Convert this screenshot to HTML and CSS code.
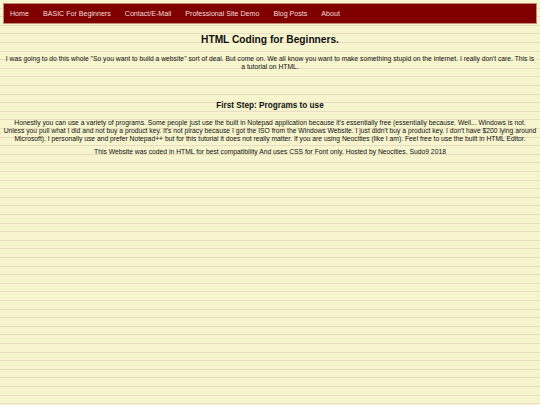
FILE: index.html
```html
<!DOCTYPE html>
<html>
<head>
<meta charset="utf-8">
<title>HTML Coding for Beginners</title>
<link rel="stylesheet" href="styles.css">
</head>
<body>
<nav class="topnav">
  <a href="#">Home</a>
  <a href="#">BASIC For Beginners</a>
  <a href="#">Contact/E-Mail</a>
  <a href="#">Professional Site Demo</a>
  <a href="#">Blog Posts</a>
  <a href="#">About</a>
</nav>
<main class="content">
  <h1 class="title">HTML Coding for Beginners.</h1>
  <p class="intro">I was going to do this whole "So you want to build a website" sort of deal. But come on. We all know you want to make something stupid on the internet. I really don't care. This is a tutorial on HTML.</p>
  <h2 class="step">First Step: Programs to use</h2>
  <p class="body">Honestly you can use a variety of programs. Some people just use the built in Notepad application because it's essentially free (essentially because. Well... Windows is not. Unless you pull what I did and not buy a product key. It's not piracy because I got the ISO from the Windows Website. I just didn't buy a product key. I don't have $200 lying around Microsoft). I personally use and prefer Notepad++ but for this tutorial it does not really matter. If you are using Neocities (like I am). Feel free to use the built in HTML Editor.</p>
  <p class="footer">This Website was coded in HTML for best compatibility And uses CSS for Font only. Hosted by Neocities. Sudo9 2018</p>
</main>
</body>
</html>
```
FILE: styles.css
```css
html, body {
  margin: 0;
  padding: 0;
}
body {
  min-height: 405px;
  font-family: "Liberation Sans", Arial, sans-serif;
  color: #111;
  background-color: #f6f5cd;
  background-image: repeating-linear-gradient(to bottom, transparent 0, transparent 7.6px, #e9dcc0 7.6px, #e9dcc0 8.6px);
  padding: 3px;
  box-sizing: border-box;
}
.topnav {
  display: flex;
  background: #800000;
  border: 1px solid #c48a7a;
  height: 19px;
  align-items: center;
  padding: 0 0 0 0;
}
.topnav a {
  color: #f3dede;
  text-decoration: none;
  font-size: 7.1px;
  padding: 0 7px;
}
.topnav a:first-child {
  padding-left: 6px;
}
.content {
  text-align: center;
  padding: 0 0.5px;
}
.title {
  font-size: 10.2px;
  font-weight: bold;
  margin: 10px 0 0;
  line-height: 12px;
}
.intro {
  font-size: 6.75px;
  line-height: 8px;
  margin: 9px 0 0;
}
.step {
  font-size: 8.2px;
  font-weight: bold;
  margin: 30px 0 0;
  line-height: 10px;
}
.body {
  font-size: 6.75px;
  line-height: 8px;
  margin: 8px 0 0;
}
.footer {
  font-size: 6.75px;
  line-height: 8px;
  margin: 5px 0 0;
}
```
